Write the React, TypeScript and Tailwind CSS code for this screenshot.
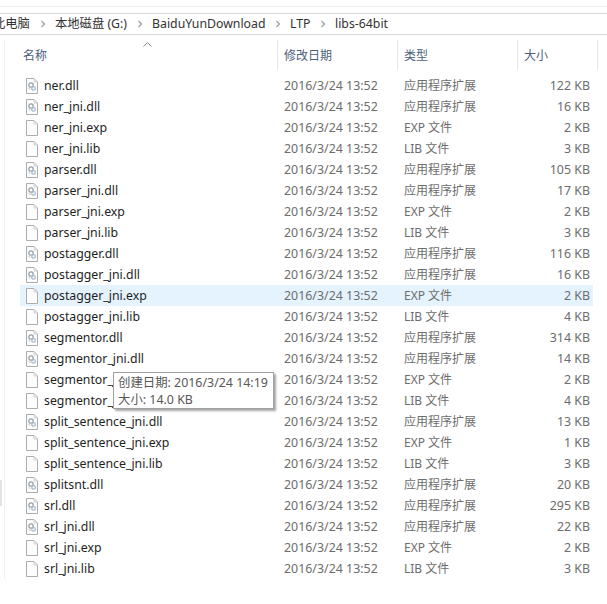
const DLL = "应用程序扩展";
const EXP = "EXP 文件";
const LIB = "LIB 文件";

type FileRow = [name: string, type: string, size: string];

const files: FileRow[] = [
  ["ner.dll", DLL, "122 KB"],
  ["ner_jni.dll", DLL, "16 KB"],
  ["ner_jni.exp", EXP, "2 KB"],
  ["ner_jni.lib", LIB, "3 KB"],
  ["parser.dll", DLL, "105 KB"],
  ["parser_jni.dll", DLL, "17 KB"],
  ["parser_jni.exp", EXP, "2 KB"],
  ["parser_jni.lib", LIB, "3 KB"],
  ["postagger.dll", DLL, "116 KB"],
  ["postagger_jni.dll", DLL, "16 KB"],
  ["postagger_jni.exp", EXP, "2 KB"],
  ["postagger_jni.lib", LIB, "4 KB"],
  ["segmentor.dll", DLL, "314 KB"],
  ["segmentor_jni.dll", DLL, "14 KB"],
  ["segmentor_jni.exp", EXP, "2 KB"],
  ["segmentor_jni.lib", LIB, "4 KB"],
  ["split_sentence_jni.dll", DLL, "13 KB"],
  ["split_sentence_jni.exp", EXP, "1 KB"],
  ["split_sentence_jni.lib", LIB, "3 KB"],
  ["splitsnt.dll", DLL, "20 KB"],
  ["srl.dll", DLL, "295 KB"],
  ["srl_jni.dll", DLL, "22 KB"],
  ["srl_jni.exp", EXP, "2 KB"],
  ["srl_jni.lib", LIB, "3 KB"],
];

function FileIcon({ isDll }: { isDll: boolean }) {
  return (
    <svg width="12" height="16" viewBox="0 0 12 16" fill="none" className="shrink-0">
      <path d="M0.5 0.5H8L11.5 4V15.5H0.5Z" fill="#fdfdfd" stroke="#acacac" />
      <path d="M8 0.5V4H11.5" stroke="#cfcfcf" />
      {isDll && (
        <g>
          <circle cx="5" cy="7" r="2.2" stroke="#9aa3ab" strokeWidth="1.3" />
          <circle cx="7.6" cy="10.4" r="1.8" stroke="#a9bccd" strokeWidth="1.3" />
          <path d="M2.5 10L4.5 12" stroke="#bcc3ca" />
        </g>
      )}
    </svg>
  );
}

function Crumb({ label, width }: { label: string; width: string }) {
  return (
    <div className={`flex items-center ${width}`}>
      <span className="whitespace-nowrap">{label}</span>
    </div>
  );
}

function Chevron() {
  return (
    <svg width="6" height="8" viewBox="0 0 6 8" className="shrink-0">
      <path d="M1.5 1L4.5 4L1.5 7" fill="none" stroke="#a0a0a0" strokeWidth="1.3" />
    </svg>
  );
}

function HeaderCell({ label, width }: { label: string; width: string }) {
  return (
    <div className={`${width} h-[30px] border-r border-[#e5e5e5] pl-[6px] pt-[7px] text-[#4c607a]`}>
      {label}
    </div>
  );
}

export default function App() {
  return (
    <div
      className="relative h-[604px] w-[607px] overflow-hidden bg-white text-[12px] text-[#1e1e1e]"
      style={{ fontFamily: '"Noto Sans", "Noto Sans CJK SC", sans-serif' }}
    >
      {/* Toolbar edge */}
      <div className="h-[7px] border-b border-[#ececec]" />

      {/* Address bar */}
      <div className="mt-[6px] flex h-[22px] items-center border-y border-[#d9d9d9] text-[12.3px] text-[#333]">
        <div className="-ml-[7px] flex items-center">
          <Crumb label="此电脑" width="w-[47px]" />
          <div className="w-[15px]"><Chevron /></div>
          <Crumb label="本地磁盘 (G:)" width="w-[82px]" />
          <div className="w-[15px]"><Chevron /></div>
          <Crumb label="BaiduYunDownload" width="w-[123px]" />
          <div className="w-[15px]"><Chevron /></div>
          <Crumb label="LTP" width="w-[30px]" />
          <div className="w-[15px]"><Chevron /></div>
          <Crumb label="libs-64bit" width="w-[60px]" />
        </div>
      </div>

      <div className="ml-[4px] border-l border-[#f0f0f0]">
        {/* Column headers */}
        <div className="relative mt-[5px] flex pl-[14px]">
          <svg width="9" height="5" viewBox="0 0 9 5" className="absolute left-[138px] top-[2px]">
            <path d="M0.5 4.5L4.5 0.5L8.5 4.5" fill="none" stroke="#8a8a8a" />
          </svg>
          <HeaderCell label="名称" width="-ml-[2px] w-[261px]" />
          <HeaderCell label="修改日期" width="w-[120px]" />
          <HeaderCell label="类型" width="w-[120px]" />
          <HeaderCell label="大小" width="w-[80px]" />
        </div>

        {/* File list */}
        <div className="mt-[5px]">
          {files.map(([name, type, size]) => (
            <div
              key={name}
              className={`ml-[15px] flex h-[21px] w-[573px] items-center ${name === "postagger_jni.exp" ? "bg-[#e5f3ff]" : ""}`}
            >
              <div className="flex w-[264px] items-center pl-[6px]">
                <FileIcon isDll={name.endsWith(".dll")} />
                <span className="ml-[6px] whitespace-nowrap pt-[1px] text-[12.3px] leading-[18px]">{name}</span>
              </div>
              <div className="w-[120px] pt-[1px] text-[12.4px] leading-[18px] text-[#6d6d6d]">2016/3/24 13:52</div>
              <div className="w-[100px] whitespace-nowrap text-[#6d6d6d]">{type}</div>
              <div className="w-[86px] pt-[1px] text-right text-[12.4px] leading-[18px] text-[#6d6d6d]">{size}</div>
            </div>
          ))}
        </div>
      </div>

      {/* Scrollbar stub */}
      <div className="absolute left-0 top-[480px] h-[26px] w-[2px] bg-[#e3e3e3]" />

      {/* Tooltip */}
      <div className="absolute left-[113px] top-[372px] h-[37px] w-[161px] border border-[#a0a0a0] bg-white pl-[4px] pt-[1px] text-[12.4px] leading-[17px] text-[#575757] shadow-[2px_2px_2px_rgba(0,0,0,0.35)]">
        <div className="whitespace-nowrap">创建日期: 2016/3/24 14:19</div>
        <div className="whitespace-nowrap">大小: 14.0 KB</div>
      </div>
    </div>
  );
}
